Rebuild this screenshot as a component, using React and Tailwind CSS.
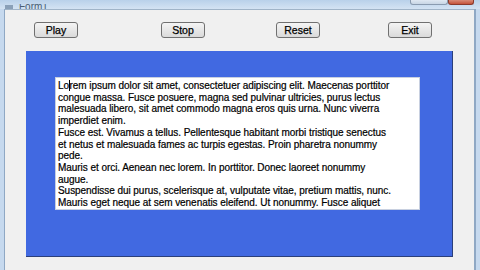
import React from 'react';

const lines = [
  'Lorem ipsum dolor sit amet, consectetuer adipiscing elit. Maecenas porttitor',
  'congue massa. Fusce posuere, magna sed pulvinar ultricies, purus lectus',
  'malesuada libero, sit amet commodo magna eros quis urna. Nunc viverra',
  'imperdiet enim.',
  'Fusce est. Vivamus a tellus. Pellentesque habitant morbi tristique senectus',
  'et netus et malesuada fames ac turpis egestas. Proin pharetra nonummy',
  'pede.',
  'Mauris et orci. Aenean nec lorem. In porttitor. Donec laoreet nonummy',
  'augue.',
  'Suspendisse dui purus, scelerisque at, vulputate vitae, pretium mattis, nunc.',
  'Mauris eget neque at sem venenatis eleifend. Ut nonummy. Fusce aliquet',
];

function WinButton({ label, className }) {
  return (
    <button
      className={
        'w-[44px] h-[16px] rounded-[3px] border border-[#707070] bg-gradient-to-b from-[#f4f4f4] to-[#dadada] text-[10.5px] leading-none text-black [-webkit-text-stroke:0.25px_#000] ' +
        className
      }
    >
      {label}
    </button>
  );
}

export default function App() {
  return (
    <div
      className="w-[480px] h-[270px] overflow-hidden flex flex-col bg-[#c6d9ee]"
      style={{ fontFamily: '"Liberation Sans", Arial, sans-serif' }}
    >
      {/* title bar strip */}
      <div className="h-[9px] flex items-end justify-between overflow-hidden bg-gradient-to-b from-[#b9d1ea] to-[#d4e3f3]">
        <div className="flex items-end gap-[6px] pl-[5px]">
          <div className="w-[8px] h-[4px] bg-[#8aa0b8]" />
          <span className="text-[10px] leading-[5px] text-[#4a5d72] h-[5px] overflow-hidden">Form1</span>
        </div>
        <div className="flex items-start h-full pr-[6px]">
          <div className="w-[38px] h-[5px] border-x border-b border-[#8a9bb0] rounded-b-[3px] bg-gradient-to-b from-[#dfe8f2] to-[#c8d6e5]" />
          <div className="w-[26px] h-[5px] border-x border-b border-[#8b3a2c] rounded-b-[3px] bg-gradient-to-b from-[#d88a77] to-[#c4523a]" />
        </div>
      </div>

      <div className="flex-1 flex px-[4px]">
        <div className="w-[1px] bg-[#8fa8c4]" />
        <div className="flex-1 flex flex-col bg-[#f0f0f0] border-t border-[#a0b4c8]">
          <div className="flex pt-[12px]">
            <WinButton label="Play" className="ml-[29px]" />
            <WinButton label="Stop" className="ml-[83px]" />
            <WinButton label="Reset" className="ml-[71px]" />
            <WinButton label="Exit" className="ml-[68px]" />
          </div>

          <div className="mt-[13px] ml-[21px] mr-[21px] h-[206px] bg-[#4169e1] border-r border-b border-[#2b3f7a] pt-[26px] pl-[29px] pr-[32px]">
            <div className="bg-white h-[133px] border border-[#c8d0e0] pl-[2px] pt-[2px] text-[10px] leading-[11.7px] text-black tracking-[-0.05px] [-webkit-text-stroke:0.2px_#000]">
              {lines.map((l, i) => (
                <div key={i} className="whitespace-nowrap">
                  {i === 0 ? (
                    <>
                      Lo<span className="border-l border-black -ml-[0.5px]" />rem ipsum dolor sit amet, consectetuer adipiscing elit. Maecenas porttitor
                    </>
                  ) : (
                    l
                  )}
                </div>
              ))}
            </div>
          </div>
        </div>
        <div className="w-[2px] bg-[#8fa8c4]" />
      </div>
    </div>
  );
}
